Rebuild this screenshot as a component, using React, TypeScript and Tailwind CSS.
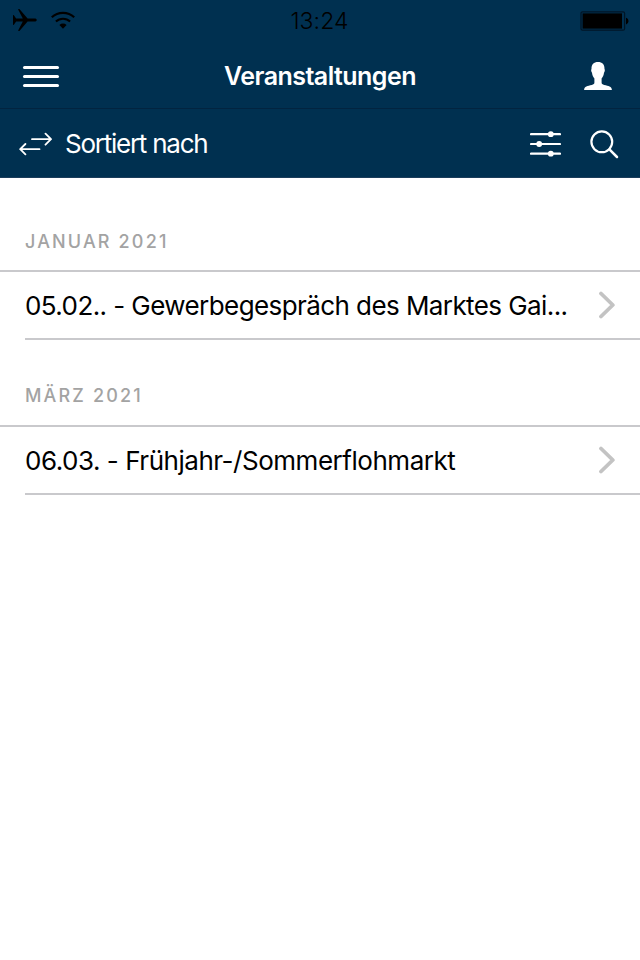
import { clsx } from "clsx"

interface EventSection {
  month: string
  items: string[]
}

const sections: EventSection[] = [
  { month: "Januar 2021", items: ["05.02.. - Gewerbegespräch des Marktes Gai..."] },
  { month: "März 2021", items: ["06.03. - Frühjahr-/Sommerflohmarkt"] },
]

function StatusBar() {
  return (
    <div className="flex h-10 items-center justify-between pl-[13px] pr-[11px] text-black">
      <div className="flex w-[97px] items-center gap-3.5">
        <svg width="24" height="24" viewBox="0 0 24 24" fill="currentColor">
          <path d="M0 7l.9.200 2.200 3.300h6.700L5 1.200l1.400-.3 8.200 9.600h6.900c1.400 0 2.300.7 2.300 1.500s-.9 1.500-2.300 1.500h-6.900l-8.200 9.600-1.400-.3 4.800-9.300H3.100L.9 16.800 0 17z" />
        </svg>
        <svg width="24" height="18" viewBox="0 0 24 18" fill="none" stroke="currentColor">
          <path d="M.8 6.300a16.200 16.200 0 0 1 22.400 0" strokeWidth="2.200" />
          <path d="M4.900 10.600a10.300 10.300 0 0 1 14.200 0" strokeWidth="2.100" />
          <path d="M8.400 14a5.200 5.200 0 0 1 7.200 0L12 17.700z" fill="currentColor" stroke="none" />
        </svg>
      </div>
      <span className="pt-0.5 text-[23px] font-light leading-none tracking-[0.1px]">13:24</span>
      <div className="flex w-[100px] justify-end pt-px">
        <svg width="49" height="20" viewBox="0 0 49 20">
          <rect x="1" y=".8" width="43.600" height="18.400" rx="1.500" fill="none" stroke="#001526" strokeWidth="1.200" />
          <rect x="2.600" y="2.400" width="39.400" height="15.200" fill="#000" />
          <path d="M46 6.800c3.300 1 3.300 5.600 0 6.600z" fill="#000" />
        </svg>
      </div>
    </div>
  )
}

function NavBar() {
  return (
    <div className="flex h-[68px] items-center justify-between pl-[23px] pr-7 text-white">
      <button type="button" className="flex w-[60px] flex-col gap-1.5 pt-1">
        {[0, 1, 2].map((i) => (
          <span key={i} className="h-[3px] w-9 rounded-full bg-white" />
        ))}
      </button>
      <h1 className="pt-1 text-[25px] font-semibold leading-none tracking-[-0.54px]">Veranstaltungen</h1>
      <button type="button" className="flex w-[55px] justify-end pt-1">
        <svg width="28" height="30" viewBox="0 0 28 30" fill="currentColor">
          <path d="M14 1C9.800 1 7.300 3.500 7.500 8c-.6.500-.4 2.700.5 3.700.3 2.600 1.100 4.300 2.400 5.700v4.100c0 1.300-.8 2.100-2.600 2.500C3.500 25 .3 25.300.1 29h27.800c-.2-3.700-3.400-4-7.700-5-1.800-.4-2.600-1.200-2.600-2.500v-4.100c1.300-1.400 2.100-3.100 2.400-5.700.9-1 1.100-3.200.5-3.700C20.700 3.500 18.200 1 14 1z" />
        </svg>
      </button>
    </div>
  )
}

function SortBar() {
  return (
    <div className="flex h-[70px] items-center border-t border-[#022440] border-b border-b-[#1b3d5b] pl-[19px] pr-[21px] pt-px text-white">
      <svg width="34" height="24" viewBox="0 0 34 24" fill="none" stroke="currentColor" strokeWidth="1.800" strokeLinecap="round" strokeLinejoin="round">
        <path d="M13 7.200h19M26.500 1.700l5.500 5.500-5.500 5.500M20.500 17.200H1.200M6.400 12l-5.200 5.200 5.200 5.200" />
      </svg>
      <span className="ml-3 flex-1 pt-px text-[26px] leading-none tracking-[-1.25px]">Sortiert nach</span>
      <svg width="31" height="26" viewBox="0 0 31 26" fill="currentColor" stroke="currentColor">
        <path d="M1 3.200h29M1 13h29M1 22.700h29" strokeWidth="2.200" strokeLinecap="round" />
        <g stroke="none">
          <circle cx="20.800" cy="3.200" r="2.900" />
          <circle cx="9.200" cy="13" r="2.900" />
          <circle cx="20.800" cy="22.700" r="2.900" />
        </g>
      </svg>
      <svg className="ml-[29px] mt-px" width="29" height="29" viewBox="0 0 29 29" fill="none" stroke="currentColor" strokeLinecap="round">
        <circle cx="11.800" cy="11.800" r="10.400" strokeWidth="2.200" />
        <path d="M19.400 19.400l7.600 7.600" strokeWidth="2.500" />
      </svg>
    </div>
  )
}

function EventRow({ title }: { title: string }) {
  return (
    <li className="ml-[25px] flex h-[68px] items-center justify-between border-b-2 border-[#c9c9cc] pr-6">
      <span
        className={clsx(
          "whitespace-nowrap pt-0.5 text-[26px] leading-none",
          title.endsWith("...") ? "tracking-[-0.58px]" : "tracking-[-0.47px]"
        )}
      >
        {title}
      </span>
      <svg width="18" height="28" viewBox="0 0 18 28" fill="none" stroke="#c3c3c3" strokeWidth="3.800" strokeLinecap="round" strokeLinejoin="round">
        <path d="M3 2.500L14.800 14 3 25.500" />
      </svg>
    </li>
  )
}

export default function App() {
  return (
    <div className="min-h-[960px] w-[640px] bg-white font-['Inter',sans-serif] text-black">
      <header className="bg-[#003050]">
        <StatusBar />
        <NavBar />
        <SortBar />
      </header>
      <main>
        {sections.map((section, i) => (
          <section key={section.month}>
            <h2
              className={clsx(
                "flex items-end border-b-2 border-[#c9c9cc] pl-[25px] text-[18px] font-medium uppercase leading-[22px] tracking-[2.15px] text-[#a3a3a3]",
                i === 0 ? "h-[94px] pb-[17px]" : "h-[87px] pb-[18px]"
              )}
            >
              {section.month}
            </h2>
            <ul>
              {section.items.map((title) => (
                <EventRow key={title} title={title} />
              ))}
            </ul>
          </section>
        ))}
      </main>
    </div>
  )
}
